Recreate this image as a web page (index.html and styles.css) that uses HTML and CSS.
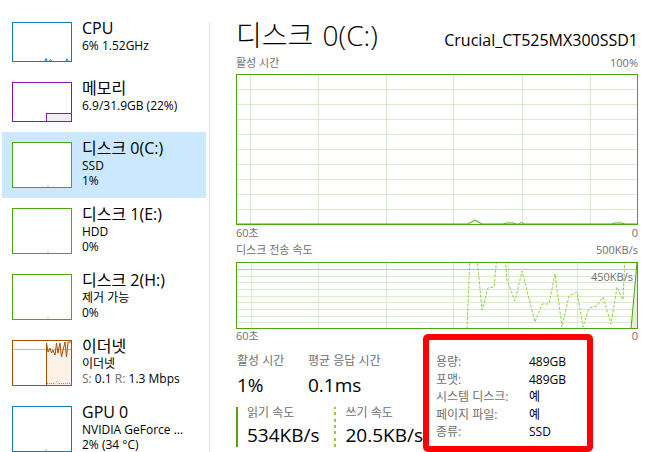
FILE: index.html
```html
<!DOCTYPE html>
<html>
<head>
  <title>작업 관리자 - 성능</title>
  <link rel="stylesheet" href="styles.css">
</head>
<body>
  <div class="app">
    <div class="sidebar">
      <div class="item">
        <svg class="thumb" width="60" height="40" viewBox="0 0 60 40">
          <polyline points="31,39.5 33,39.5 34,36.5 35.5,39.5 37,39.5 38.5,37.5 40,39.5 53.5,39.5 55,36.8 56.5,39.5" fill="#e8f2f9" stroke="#117dbb"/>
          <rect x="0.5" y="0.5" width="59" height="39" fill="none" stroke="#117dbb"/>
        </svg>
        <div class="info">
          <div class="name">CPU</div>
          <div class="sub">6% 1.52GHz</div>
        </div>
      </div>
      <div class="item">
        <svg class="thumb" width="60" height="40" viewBox="0 0 60 40">
          <rect x="34.5" y="31.5" width="25" height="8" fill="#f3edf6" stroke="#8b12ae"/>
          <rect x="0.5" y="0.5" width="59" height="39" fill="none" stroke="#8b12ae"/>
        </svg>
        <div class="info">
          <div class="name">메모리</div>
          <div class="sub">6.9/31.9GB (22%)</div>
        </div>
      </div>
      <div class="item selected">
        <svg class="thumb" width="60" height="46" viewBox="0 0 60 46">
          <rect x="0.5" y="0.5" width="59" height="45" fill="#fff" stroke="#4da60c"/>
          <line x1="35.5" y1="44" x2="36.5" y2="44" stroke="#4da60c"/>
        </svg>
        <div class="info">
          <div class="name">디스크 0(C:)</div>
          <div class="sub">SSD</div>
          <div class="sub">1%</div>
        </div>
      </div>
      <div class="item">
        <svg class="thumb" width="60" height="46" viewBox="0 0 60 46">
          <rect x="0.5" y="0.5" width="59" height="45" fill="#fff" stroke="#4da60c"/>
          <line x1="35.5" y1="44" x2="36.5" y2="44" stroke="#4da60c"/>
        </svg>
        <div class="info">
          <div class="name">디스크 1(E:)</div>
          <div class="sub">HDD</div>
          <div class="sub">0%</div>
        </div>
      </div>
      <div class="item">
        <svg class="thumb" width="60" height="46" viewBox="0 0 60 46">
          <rect x="0.5" y="0.5" width="59" height="45" fill="#fff" stroke="#4da60c"/>
          <line x1="35.5" y1="44" x2="36.5" y2="44" stroke="#4da60c"/>
        </svg>
        <div class="info">
          <div class="name">디스크 2(H:)</div>
          <div class="sub">제거 가능</div>
          <div class="sub">0%</div>
        </div>
      </div>
      <div class="item">
        <svg class="thumb" width="60" height="46" viewBox="0 0 60 46">
          <polygon points="34.5,45 34.5,3 36,12 38,8 39.5,13 41,10 43,15 44.5,3 46,13 48,3 49.5,17 51,10 53,2 54.5,17 56,2 59.5,2 59.5,45" fill="#fcf1e6"/>
          <line x1="0" y1="9.5" x2="60" y2="9.5" stroke="#dcb38c"/>
          <polyline points="34.5,45 34.5,3 36,12 38,8 39.5,13 41,10 43,15 44.5,3 46,13 48,3 49.5,17 51,10 53,2 54.5,17 56,2 59.5,2" fill="none" stroke="#a74f01"/>
          <polyline points="35,43.5 43,43.5 44.5,41.5 46,43.5 59,43.5" fill="none" stroke="#d2783c" stroke-dasharray="1 1"/>
          <rect x="0.5" y="0.5" width="59" height="45" fill="none" stroke="#a74f01"/>
        </svg>
        <div class="info">
          <div class="name">이더넷</div>
          <div class="sub">이더넷</div>
          <div class="sub"><span class="muted">S:</span> 0.1 <span class="muted">R:</span> 1.3 Mbps</div>
        </div>
      </div>
      <div class="item">
        <svg class="thumb" width="60" height="46" viewBox="0 0 60 46">
          <rect x="0.5" y="0.5" width="59" height="45" fill="#fff" stroke="#117dbb"/>
          <line x1="33.5" y1="44" x2="34.5" y2="44" stroke="#117dbb"/>
        </svg>
        <div class="info">
          <div class="name">GPU 0</div>
          <div class="sub">NVIDIA GeForce ...</div>
          <div class="sub">2% (34 °C)</div>
        </div>
      </div>
    </div>

    <div class="divider"></div>

    <div class="main">
      <div class="header">
        <div class="title">디스크 0(C:)</div>
        <div class="model">Crucial_CT525MX300SSD1</div>
      </div>

      <div class="chart-head"><span>활성 시간</span><span>100%</span></div>
      <svg class="chart" width="402" height="151" viewBox="0 0 402 151">
        <g stroke="#d9ebc9">
          <line x1="14.5" y1="0" x2="14.5" y2="151"/>
          <line x1="82.5" y1="0" x2="82.5" y2="151"/>
          <line x1="150.5" y1="0" x2="150.5" y2="151"/>
          <line x1="217.5" y1="0" x2="217.5" y2="151"/>
          <line x1="286.5" y1="0" x2="286.5" y2="151"/>
          <line x1="354.5" y1="0" x2="354.5" y2="151"/>
          <line x1="0" y1="15.5" x2="402" y2="15.5"/>
          <line x1="0" y1="30.5" x2="402" y2="30.5"/>
          <line x1="0" y1="45.5" x2="402" y2="45.5"/>
          <line x1="0" y1="60.5" x2="402" y2="60.5"/>
          <line x1="0" y1="75.5" x2="402" y2="75.5"/>
          <line x1="0" y1="90.5" x2="402" y2="90.5"/>
          <line x1="0" y1="105.5" x2="402" y2="105.5"/>
          <line x1="0" y1="120.5" x2="402" y2="120.5"/>
          <line x1="0" y1="135.5" x2="402" y2="135.5"/>
        </g>
        <polyline points="0,150 232,150 239,146 246,150 267,150 270,149 277,149 280,150 283,150 285.5,148.5 288,150 376,150 379,149 386,149 389,150 402,150" fill="#e9f4df" stroke="#4da60c"/>
        <rect x="0.5" y="0.5" width="401" height="150" fill="none" stroke="#4da60c"/>
      </svg>
      <div class="chart-axis"><span>60초</span><span>0</span></div>

      <div class="chart-head second"><span>디스크 전송 속도</span><span>500KB/s</span></div>
      <div class="chart-wrap">
        <svg class="chart" width="402" height="67" viewBox="0 0 402 67">
          <g stroke="#d9ebc9">
            <line x1="15.5" y1="0" x2="15.5" y2="67"/>
            <line x1="82.5" y1="0" x2="82.5" y2="67"/>
            <line x1="150.5" y1="0" x2="150.5" y2="67"/>
            <line x1="217.5" y1="0" x2="217.5" y2="67"/>
            <line x1="272.5" y1="0" x2="272.5" y2="67"/>
            <line x1="341.5" y1="0" x2="341.5" y2="67"/>
            <line x1="0" y1="14.5" x2="402" y2="14.5"/>
            <line x1="0" y1="20.5" x2="402" y2="20.5"/>
            <line x1="0" y1="27.5" x2="402" y2="27.5"/>
            <line x1="0" y1="34.5" x2="402" y2="34.5"/>
            <line x1="0" y1="40.5" x2="402" y2="40.5"/>
            <line x1="0" y1="47.5" x2="402" y2="47.5"/>
            <line x1="0" y1="54.5" x2="402" y2="54.5"/>
            <line x1="0" y1="60.5" x2="402" y2="60.5"/>
          </g>
          <line x1="0" y1="7.5" x2="402" y2="7.5" stroke="#a9d88a"/>
          <polyline points="231,67 234,-5 241,-5 246,48 252,26 258,25 261,-5 269,-5 271,18 279,39 286,9 299,60 306,42 313,42 319,12 326,65 333,34 341,30 347,65 353,46 361,44 367,35 375,62 381,25 387,38 389,-5" fill="none" stroke="#8fd34f" stroke-dasharray="3 1.5"/>
          <polygon points="395,67 401,0 401,67" fill="#e3f2d4"/>
          <line x1="395" y1="67" x2="401" y2="0" stroke="#4da60c"/>
          <rect x="0.5" y="0.5" width="401" height="66" fill="none" stroke="#4da60c"/>
        </svg>
        <span class="scale">450KB/s</span>
      </div>
      <div class="chart-axis last"><span>60초</span><span>0</span></div>

      <div class="bottom">
        <div class="stats">
          <div class="stat-row">
            <div class="stat first">
              <div class="stat-label">활성 시간</div>
              <div class="stat-value">1%</div>
            </div>
            <div class="stat">
              <div class="stat-label">평균 응답 시간</div>
              <div class="stat-value">0.1ms</div>
            </div>
          </div>
          <div class="stat-row rw">
            <div class="rate read">
              <div class="stat-label">읽기 속도</div>
              <div class="stat-value">534KB/s</div>
            </div>
            <div class="rate write">
              <div class="stat-label">쓰기 속도</div>
              <div class="stat-value">20.5KB/s</div>
            </div>
          </div>
        </div>

        <div class="props">
          <span class="key">용량:</span><span>489GB</span>
          <span class="key">포맷:</span><span>489GB</span>
          <span class="key">시스템 디스크:</span><span>예</span>
          <span class="key">페이지 파일:</span><span>예</span>
          <span class="key">종류:</span><span>SSD</span>
        </div>
      </div>
    </div>
  </div>
</body>
</html>
```

FILE: styles.css
```css
/* Task manager - performance / disk */

body {
    margin: 0;
    padding: 0;
    font-family: "Open Sans", "Noto Sans CJK KR", sans-serif;
    background: #fff;
    color: #000;
}

.app {
    display: flex;
    width: 653px;
    height: 452px;
    overflow: hidden;
}

/* left list */

.sidebar {
    width: 204px;
    flex: none;
    padding: 12px 3px 0 2px;
}

.item {
    display: flex;
    gap: 10px;
    padding: 10px 0 10px 10px;
}

.item.selected {
    background: #cce8ff;
}

.thumb {
    display: block;
    flex: none;
}

.info {
    margin-top: -4px;
    white-space: nowrap;
}

.name {
    font-size: 16px;
    line-height: 20px;
}

.sub {
    font-size: 12px;
    line-height: 15px;
}

.muted {
    color: #707070;
}

.divider {
    width: 1px;
    flex: none;
    margin-top: 22px;
    background: #e3e3e3;
}

/* right side */

.main {
    flex: 1;
    padding: 0 15px 0 26px;
}

.header {
    display: flex;
    justify-content: space-between;
    align-items: baseline;
    height: 34px;
    padding-top: 18px;
}

.title {
    font-size: 28px;
    font-weight: 300;
    line-height: 34px;
    word-spacing: 2px;
}

.model {
    font-size: 16px;
    line-height: 22px;
}

.chart-head,
.chart-axis {
    display: flex;
    justify-content: space-between;
    font-size: 11px;
    line-height: 15px;
    color: #707070;
}

.chart-head {
    height: 19px;
    padding-top: 3px;
}

.chart-head.second {
    height: 20px;
    padding-top: 0;
}

.chart-axis {
    height: 17px;
}

.chart-axis.last {
    margin-top: -1px;
    height: 15px;
}

.chart {
    display: block;
}

.chart-wrap {
    position: relative;
}

.chart-wrap .scale {
    position: absolute;
    top: 7px;
    right: 5px;
    font-size: 11px;
    line-height: 15px;
    color: #707070;
}

/* bottom numbers */

.bottom {
    display: flex;
    margin-top: -9px;
    height: 118px;
}

.stats {
    width: 187px;
    flex: none;
    padding-top: 19px;
    white-space: nowrap;
}

.stat-row {
    display: flex;
}

.stat {
    padding-left: 1px;
}

.stat.first {
    width: 70px;
}

.stat-label {
    font-size: 12px;
    line-height: 16px;
    color: #707070;
}

.stat-value {
    margin-top: 4px;
    font-size: 19px;
    line-height: 24px;
}

.stat-row.rw {
    margin-top: 10px;
}

.rate {
    position: relative;
    padding-left: 9px;
}

.rate.read {
    width: 93px;
    border-left: 2px solid #4da60c;
}

.rate.write {
    border-left: 2px solid transparent;
    border-image: repeating-linear-gradient(to bottom, #8ad23c 0 3px, transparent 3px 6px) 1;
}

.rate .stat-label {
    line-height: 12px;
}

.props {
    width: 170px;
    height: 118px;
    box-sizing: border-box;
    flex: none;
    display: grid;
    grid-template-columns: 93px auto;
    align-content: start;
    padding: 13px 0 0 7px;
    border: 6px solid #ff0000;
    border-radius: 5px;
    background: #fff;
    font-size: 12px;
    line-height: 17.5px;
    white-space: nowrap;
}

.props .key {
    color: #707070;
}
```
